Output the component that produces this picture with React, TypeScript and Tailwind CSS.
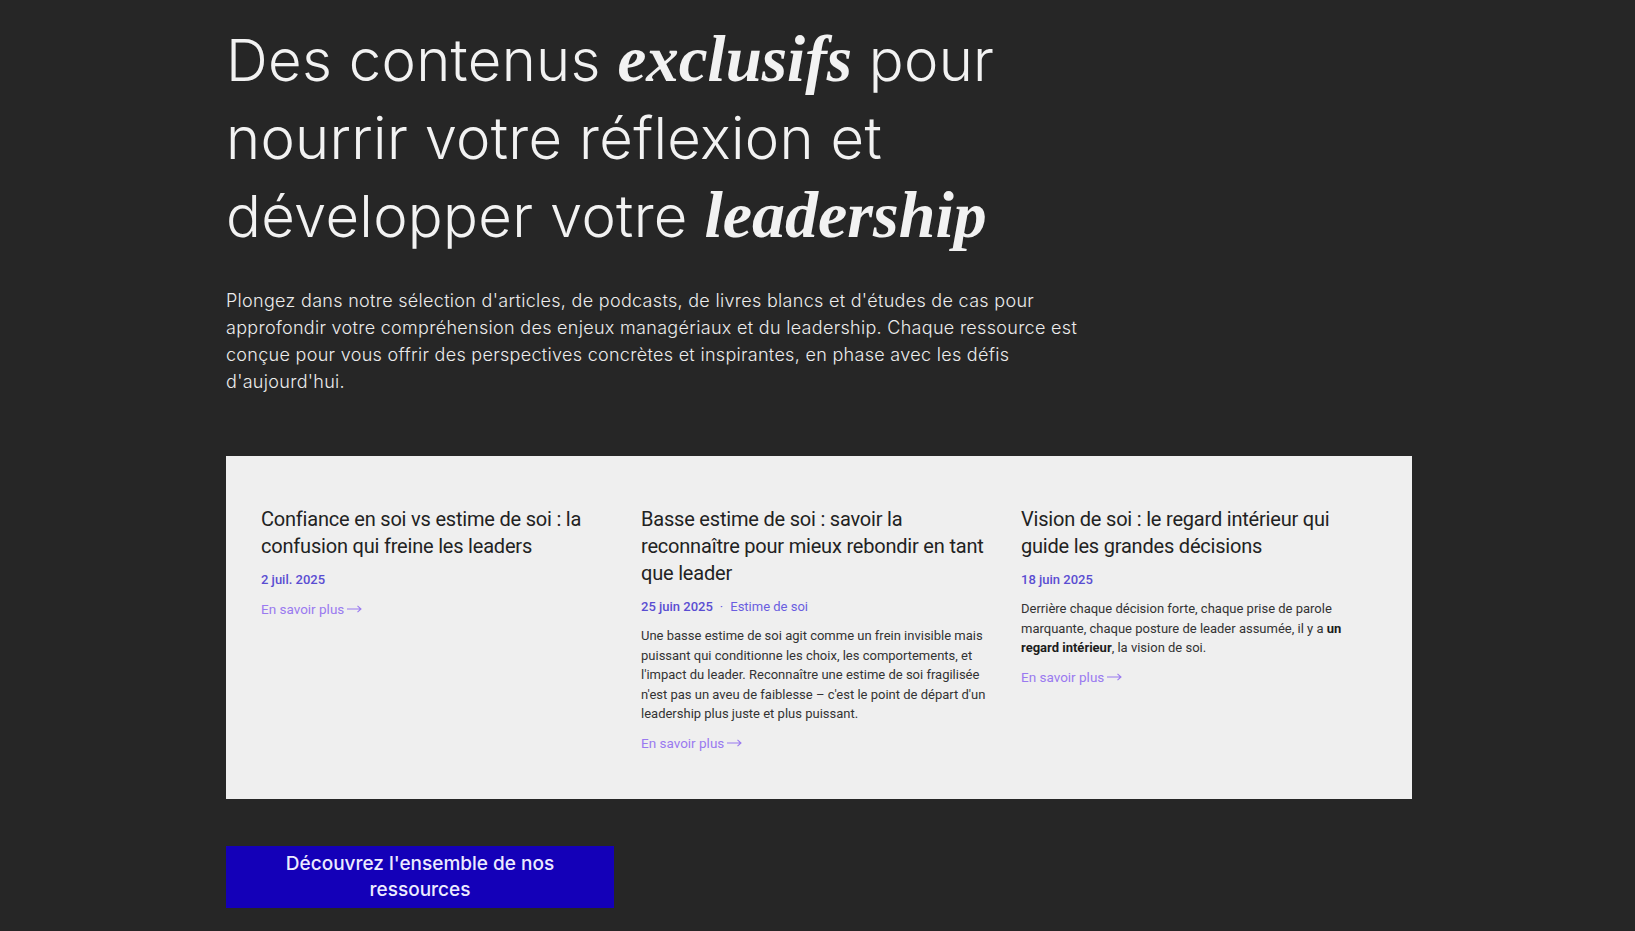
import React from "react";

type Article = {
  title: string;
  date: string;
  tag?: string;
  excerpt?: React.ReactNode;
};

const articles: Article[] = [
  {
    title: "Confiance en soi vs estime de soi : la confusion qui freine les leaders",
    date: "2 juil. 2025",
  },
  {
    title: "Basse estime de soi : savoir la reconnaître pour mieux rebondir en tant que leader",
    date: "25 juin 2025",
    tag: "Estime de soi",
    excerpt:
      "Une basse estime de soi agit comme un frein invisible mais puissant qui conditionne les choix, les comportements, et l'impact du leader. Reconnaître une estime de soi fragilisée n'est pas un aveu de faiblesse – c'est le point de départ d'un leadership plus juste et plus puissant.",
  },
  {
    title: "Vision de soi : le regard intérieur qui guide les grandes décisions",
    date: "18 juin 2025",
    excerpt: (
      <>
        Derrière chaque décision forte, chaque prise de parole marquante, chaque posture de leader assumée, il y a{" "}
        <strong className="font-bold text-[#1c1c1c]">un regard intérieur</strong>, la vision de soi.
      </>
    ),
  },
];

function ArticleCard({ article }: { article: Article }) {
  return (
    <div className="flex flex-col">
      <h3 className="text-[20px] leading-[27px] tracking-[-0.2px] text-[#222222] font-normal">
        {article.title}
      </h3>
      <div className="mt-[10px] flex items-center text-[13px] leading-[20px]">
        <span className="font-medium text-[#5a4dd2]">{article.date}</span>
        {article.tag && (
          <>
            <span className="mx-[7px] text-[#6a5ee0]">·</span>
            <span className="text-[#6a5ee0]">{article.tag}</span>
          </>
        )}
      </div>
      {article.excerpt && (
        <p className="mt-[9px] text-[13px] leading-[19.5px] text-[#333333]">{article.excerpt}</p>
      )}
      <a href="#" className="mt-[9px] flex items-center gap-[3px] text-[13.5px] leading-[20px] text-[#9a7af0]">
        En savoir plus
        <svg width="15" height="8" viewBox="0 0 15 8" fill="none" stroke="currentColor" strokeWidth="1.1">
          <path d="M0 4h14M10.5 0.8L14 4l-3.5 3.2" />
        </svg>
      </a>
    </div>
  );
}

export default function App() {
  return (
    <div className="min-h-screen bg-[#262626] font-['Roboto',sans-serif]">
      <div className="pl-[226px] pt-[21px] pr-[223px] pb-10">
        <h1 className="max-w-[820px] font-['Inter',sans-serif] text-[58px] leading-[78px] font-light tracking-[0.3px] text-[#f2f2f2]">
          Des contenus{" "}
          <span className="font-['Liberation_Serif',serif] italic font-bold text-[65px] leading-none tracking-normal">
            exclusifs
          </span>{" "}
          pour nourrir votre réflexion et développer votre{" "}
          <span className="font-['Liberation_Serif',serif] italic font-bold text-[66px] leading-none tracking-normal">
            leadership
          </span>
        </h1>

        <p className="mt-[32px] max-w-[885px] font-['Inter',sans-serif] text-[18px] leading-[27px] font-light tracking-[0.3px] text-[#ececec]">
          Plongez dans notre sélection d'articles, de podcasts, de livres blancs et d'études de cas pour approfondir
          votre compréhension des enjeux managériaux et du leadership. Chaque ressource est conçue pour vous offrir
          des perspectives concrètes et inspirantes, en phase avec les défis d'aujourd'hui.
        </p>

        <div className="mt-[61px] grid grid-cols-3 gap-[24px] bg-[#efefef] px-[35px] pt-[50px] pb-[46px]">
          {articles.map((a) => (
            <ArticleCard key={a.title} article={a} />
          ))}
        </div>

        <button className="mt-[47px] w-[388px] bg-[#1400b8] px-12 py-[5px] text-center font-['Inter',sans-serif] text-[19px] leading-[26px] font-medium text-[#ecebff]">
          Découvrez l'ensemble de nos ressources
        </button>
      </div>
    </div>
  );
}
